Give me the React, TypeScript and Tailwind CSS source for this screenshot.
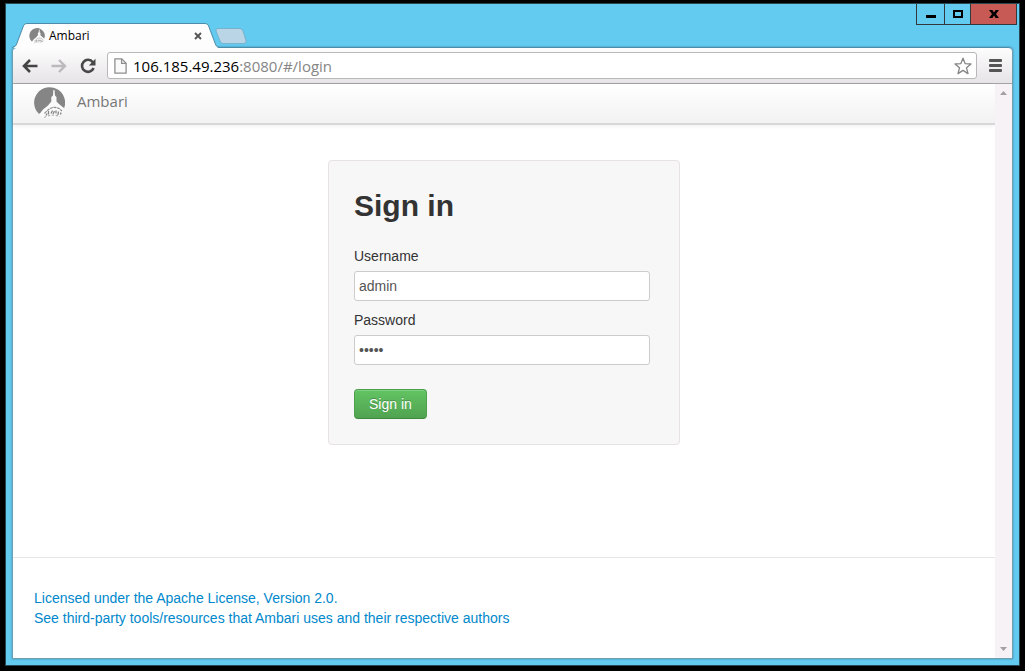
import React from "react";

function AmbariLogo({ className }: { className: string }) {
  return (
    <svg viewBox="0 0 31 32" className={className} aria-hidden="true">
      <path
        d="M4.500 26.500A15.500 15.500 0 1 1 30 21.500L22 16L8 27Z"
        fill="#858585"
      />
      <path
        d="M19.300 3H20.500L21 8.500L22.500 10V14.500L25 17L30.500 21.500L29 25L24 31H9L5.500 27L9 22.500L14 18.500L17.300 14.500V10L19 8.500Z"
        fill="#fbfafa"
      />
      <path
        d="M10.500 26.500Q19.500 15.500 28 24"
        fill="none"
        stroke="#8d8b89"
        strokeWidth="1.200"
        strokeDasharray="3 .7"
      />
      <path
        d="M12 28.500L13 26.500M14.500 27.500L14.500 24M17 26.500L18.500 23.500M19 27L20.500 24M22 26.500L22 23.500M24 28L24.500 24.500M26.500 27.500L27 25.500"
        stroke="#858585"
        strokeWidth="1.300"
        fill="none"
      />
      <path
        d="M10 30.500Q18 26.500 26 29.500"
        fill="none"
        stroke="#b4b1ac"
        strokeWidth="1.200"
        strokeDasharray="2.4 1.6"
      />
    </svg>
  );
}

function WindowControls() {
  return (
    <div className="flex h-[21px] border-x border-b border-[#33383b]">
      <button type="button" aria-label="Minimize" className="flex w-[27px] items-center justify-center">
        <svg width="10" height="10" viewBox="0 0 10 10">
          <rect y="6" width="10" height="3" fill="#000" />
        </svg>
      </button>
      <button
        type="button"
        aria-label="Maximize"
        className="flex w-[27px] items-center justify-center border-x border-[#33383b]"
      >
        <svg width="10" height="8" viewBox="0 0 10 8">
          <rect x="1" y="1" width="8" height="6" fill="none" stroke="#000" strokeWidth="2" />
        </svg>
      </button>
      <button type="button" aria-label="Close" className="flex w-[45px] items-center justify-center bg-[#c75a54]">
        <svg width="10" height="8" viewBox="0 0 10 8">
          <path d="M0 0H3.4L5 2.4L6.6 0H10L7 4L10 8H6.6L5 5.6L3.4 8H0L3 4Z" fill="#000" />
        </svg>
      </button>
    </div>
  );
}

function TabStrip() {
  return (
    <div className="flex h-[43px] items-start justify-between pl-[6px] pr-[2px]">
      <div className="relative z-10 flex self-end">
        <div className="relative -mb-px flex h-[25px] w-[207px] items-center pr-[13px] pl-[17px]">
          <svg
            className="absolute inset-0"
            width="207"
            height="25"
            viewBox="0 0 207 25"
            aria-hidden="true"
          >
            <path
              d="M0 25 C3 24 4 23 5 20 L11 4 C12 1 13 .5 16 .5 L192 .5 C195 .5 196 1 197 4 L203 20 C204 23 205 24 207 25 Z"
              fill="#fefdfe"
            />
            <path
              d="M0 24.5 C3 24 4 23 5 20 L11 4 C12 1 13 .5 16 .5 L192 .5 C195 .5 196 1 197 4 L203 20 C204 23 205 24 207 24.5"
              fill="none"
              stroke="#4b8ca8"
              strokeWidth="1"
            />
          </svg>
          <AmbariLogo className="relative size-4" />
          <span className="relative ml-1 flex-1 font-['Open_Sans','Noto_Sans',sans-serif] text-[12px] leading-4 text-black">
            Ambari
          </span>
          <button type="button" aria-label="Close tab" className="relative flex size-4 items-center justify-center">
            <svg width="8" height="8" viewBox="0 0 8 8">
              <path d="M1 1L7 7M7 1L1 7" stroke="#555" strokeWidth="1.9" />
            </svg>
          </button>
        </div>
        <button type="button" aria-label="New tab" className="-ml-1 mt-[5px] self-start">
          <svg width="32" height="16" viewBox="0 0 32 16">
            <path
              d="M3 .5H25Q27 .5 28 3L31 12.5Q31.500 15.500 29 15.500H8Q6 15.500 5 13L1 3Q.3 .5 3 .5Z"
              fill="#b9d5e6"
              stroke="#77b2ce"
            />
          </svg>
        </button>
      </div>
      <WindowControls />
    </div>
  );
}

function Toolbar() {
  return (
    <div className="flex h-[37px] items-start rounded-t-[4px] border-t border-b border-t-[#4b8ca8] border-b-[#a5a3a5] bg-linear-to-b from-[#fefdfe] to-[#e6e4e6] pt-1 pr-[10px] pl-[9px]">
      <button type="button" aria-label="Back" className="flex h-[27px] w-[16px] items-center justify-center">
        <svg width="16" height="14" viewBox="0 0 16 14" fill="none" stroke="#444" strokeWidth="2.6">
          <path d="M8 1L2 7L8 13M2 7H15.500" />
        </svg>
      </button>
      <button type="button" aria-label="Forward" className="ml-[13px] flex h-[27px] w-[16px] items-center justify-center">
        <svg width="16" height="14" viewBox="0 0 16 14" fill="none" stroke="#bbb9bb" strokeWidth="2.4">
          <path d="M8 1L14 7L8 13M14 7H.5" />
        </svg>
      </button>
      <button type="button" aria-label="Reload" className="ml-[13px] flex h-[27px] w-[16px] items-center justify-center">
        <svg width="16" height="16" viewBox="0 0 16 16">
          <path d="M12.800 4.200A6 6 0 1 0 13.600 10" fill="none" stroke="#484848" strokeWidth="2.600" />
          <path d="M15.500 .8V7.500H8.800Z" fill="#484848" />
        </svg>
      </button>
      <div className="ml-[11px] flex h-[27px] min-w-0 flex-1 items-center rounded-[3px] border border-[#b9b7b9] bg-white pr-1 pl-[6px]">
        <svg width="13" height="16" viewBox="0 0 13 16" className="shrink-0">
          <path d="M.9 .9H7.800L12.100 5.200V15.100H.9Z" fill="#fafafa" stroke="#8f8f8f" strokeWidth="1.300" />
          <path d="M7.600 .9V5.400H12.100" fill="none" stroke="#8f8f8f" strokeWidth="1.300" />
        </svg>
        <div
          role="textbox"
          aria-label="Address"
          tabIndex={0}
          className="ml-[6px] min-w-0 flex-1 truncate font-['Open_Sans','Noto_Sans',sans-serif] text-[15px] leading-5 text-[#858585]"
        >
          <span className="text-black">106.185.49.236</span>:8080/#/login
        </div>
        <button type="button" aria-label="Bookmark this page">
          <svg width="18" height="18" viewBox="0 0 18 18">
            <path
              d="M9 1.200L11.100 6.600L17 7L12.500 10.800L14 16.600L9 13.400L4 16.600L5.500 10.800L1 7L6.900 6.600Z"
              fill="#fff"
              stroke="#858585"
              strokeWidth="1.300"
              strokeLinejoin="round"
            />
          </svg>
        </button>
      </div>
      <button type="button" aria-label="Menu" className="ml-3 flex h-[27px] items-center">
        <svg width="13" height="13" viewBox="0 0 13 13" fill="#555">
          <rect y="0" width="13" height="3" rx="1" />
          <rect y="5" width="13" height="3" rx="1" />
          <rect y="10" width="13" height="3" rx="1" />
        </svg>
      </button>
    </div>
  );
}

function SignInCard() {
  const field =
    "block h-[30px] w-full rounded-[3px] border border-[#ccc] bg-white px-1 text-[14px] leading-5 text-[#555] outline-none";
  return (
    <form
      className="w-full max-w-[352px] rounded-[4px] border border-[#e7e2e4] bg-[#f7f7f7] py-[25px] pr-[29px] pl-[25px]"
      onSubmit={(event) => event.preventDefault()}
    >
      <h2 className="mb-5 text-[30px] leading-10 font-bold">Sign in</h2>
      <label htmlFor="username" className="mb-[5px] block">
        Username
      </label>
      <input id="username" type="text" defaultValue="admin" className={field} />
      <label htmlFor="password" className="mt-[9px] mb-[5px] block">
        Password
      </label>
      <input id="password" type="password" defaultValue="admin" className={field} />
      <button
        type="submit"
        className="mt-6 block h-[30px] rounded-[4px] border border-[#4c9f4c] border-b-[#3f883f] bg-linear-to-b from-[#62c462] to-[#51a351] px-[14px] leading-5 text-white shadow-[inset_0_1px_0_rgba(255,255,255,0.2)] [text-shadow:0_-1px_0_rgba(0,0,0,0.25)]"
      >
        Sign in
      </button>
    </form>
  );
}

function Scrollbar() {
  return (
    <div className="flex w-[17px] shrink-0 flex-col items-center justify-between bg-[#f6f2f6] pt-[7px] pb-[7px]" aria-hidden="true">
      <svg width="7" height="4" viewBox="0 0 7 4">
        <path d="M0 4L3.500 0L7 4Z" fill="#a3a0a3" />
      </svg>
      <svg width="7" height="4" viewBox="0 0 7 4">
        <path d="M0 0L3.500 4L7 0Z" fill="#a3a0a3" />
      </svg>
    </div>
  );
}

export default function App() {
  return (
    <div className="flex h-screen flex-col bg-black px-[5px] pt-[3px] pb-[5px] font-['Liberation_Sans',Arial,sans-serif] text-[14px] leading-5 text-[#333]">
      <div className="flex min-h-0 flex-1 flex-col border border-[#2b4753] bg-[#63caf0]">
        <TabStrip />
        <div className="mx-[6px] mb-[6px] flex min-h-0 flex-1 flex-col rounded-t-[4px] border-x border-b border-[#6d9fb3] shadow-[0_0_2px_#3f7f9a]">
          <Toolbar />
          <div className="flex min-h-0 flex-1 bg-white">
            <div className="flex min-w-0 flex-1 flex-col">
              <header className="flex h-[41px] shrink-0 items-start border-b-2 border-[#d9d6d9] bg-linear-to-b from-white to-[#f3f2f3] px-[21px] pt-[3px] shadow-[0_1px_4px_rgba(0,0,0,0.07)]">
                <a href="#/" className="flex text-[#777]">
                  <AmbariLogo className="h-8 w-[31px]" />
                  <span className="ml-3 pt-1 font-['Open_Sans','Noto_Sans',sans-serif] text-[15px] leading-5">
                    Ambari
                  </span>
                </a>
              </header>
              <main className="flex flex-1 items-start justify-center pt-[35px]">
                <SignInCard />
              </main>
              <footer className="flex flex-col items-start border-t border-[#e5e5e5] px-[21px] pt-[30px] pb-[30px] text-[#0088cc]">
                <a href="#/license">Licensed under the Apache License, Version 2.0.</a>
                <a href="#/third-party">
                  See third-party tools/resources that Ambari uses and their respective authors
                </a>
              </footer>
            </div>
            <Scrollbar />
          </div>
        </div>
      </div>
    </div>
  );
}
